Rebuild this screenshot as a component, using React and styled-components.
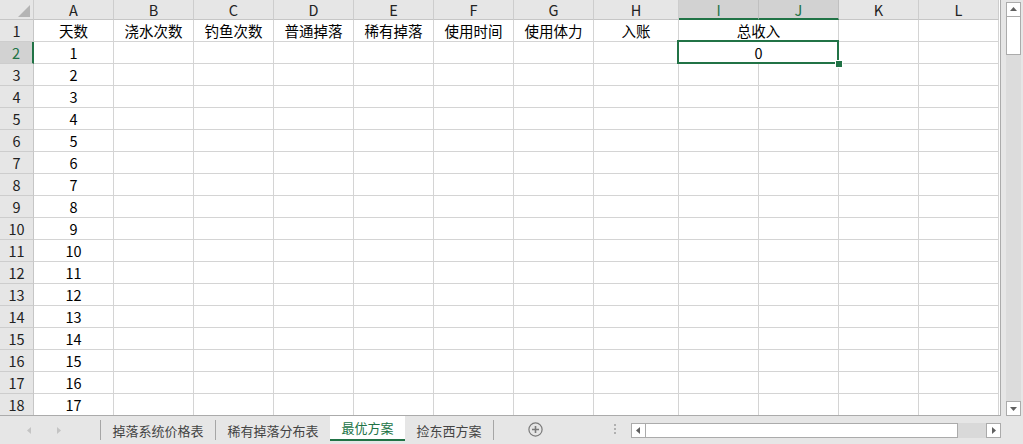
import React from "react";
import styled, { createGlobalStyle } from "styled-components";

const GlobalStyle = createGlobalStyle`
  html, body {
    margin: 0;
    padding: 0;
    background: #e6e6e6;
  }
  body {
    font-family: "Noto Sans CJK SC", "Liberation Sans", sans-serif;
  }
`;

const GREEN = "#217346";

// column letters and widths, A..L
const COLUMNS = [
  ["A", 80], ["B", 80], ["C", 80], ["D", 80], ["E", 80], ["F", 80],
  ["G", 80], ["H", 85], ["I", 80], ["J", 80], ["K", 80], ["L", 80],
];

const HEADINGS = ["天数", "浇水次数", "钓鱼次数", "普通掉落", "稀有掉落", "使用时间", "使用体力", "入账"];

const SHEETS = [
  { name: "掉落系统价格表", sep: true },
  { name: "稀有掉落分布表", sep: false },
  { name: "最优方案", active: true },
  { name: "捡东西方案", sep: true },
];

const Page = styled.div`
  width: 1023px;
  height: 444px;
  display: flex;
  flex-direction: column;
  overflow: hidden;
  background: #e6e6e6;
`;

const Body = styled.div`
  height: 416px;
  display: flex;
`;

const SheetArea = styled.div`
  width: 1001px;
  height: 416px;
  overflow: hidden;
  border-right: 1px solid #ababab;
  border-bottom: 1px solid #ababab;
  box-sizing: border-box;
  background: #fff;
`;

const Grid = styled.div`
  display: grid;
  grid-template-columns: 34px ${COLUMNS.map(([, w]) => `${w}px`).join(" ")};
  grid-auto-rows: 22px;
  grid-template-rows: 20px;
`;

const Cell = styled.div`
  box-sizing: border-box;
  border-right: 1px solid #d4d4d4;
  border-bottom: 1px solid #d4d4d4;
  display: flex;
  align-items: flex-end;
  justify-content: center;
  padding-bottom: 1px;
  font-size: 14.5px;
  line-height: 18px;
  color: #000;
  white-space: nowrap;
  position: relative;
  grid-column: ${(p) => (p.$span ? `span ${p.$span}` : "auto")};
`;

const ColHead = styled.div`
  box-sizing: border-box;
  background: ${(p) => (p.$sel ? "#d2d2d2" : "#e6e6e6")};
  border-right: 1px solid ${(p) => (p.$sel ? "#c0c0c0" : "#cdcdcd")};
  border-bottom: ${(p) => (p.$sel ? `2px solid ${GREEN}` : "1px solid #c6c6c6")};
  color: ${(p) => (p.$sel ? GREEN : "#222")};
  display: flex;
  align-items: center;
  justify-content: center;
  font-size: 14.5px;
  line-height: 18px;
  padding-top: ${(p) => (p.$sel ? "1px" : "0")};
`;

const Corner = styled.div`
  box-sizing: border-box;
  background: #e6e6e6;
  border-right: 1px solid #cdcdcd;
  border-bottom: 1px solid #c6c6c6;
  display: flex;
  align-items: flex-end;
  justify-content: flex-end;
  padding: 0 3px 2px 0;
`;

const RowHead = styled.div`
  box-sizing: border-box;
  background: ${(p) => (p.$sel ? "#d2d2d2" : "#e6e6e6")};
  border-right: ${(p) => (p.$sel ? `2px solid ${GREEN}` : "1px solid #c6c6c6")};
  border-bottom: 1px solid #cdcdcd;
  color: ${(p) => (p.$sel ? GREEN : "#222")};
  display: flex;
  align-items: flex-end;
  justify-content: center;
  padding-bottom: 1px;
  font-size: 14.5px;
  line-height: 18px;
`;

// selection frame drawn over the merged cell I2:J2
const Selection = styled.div`
  position: absolute;
  left: -2px;
  top: -2px;
  right: -1px;
  bottom: -1px;
  border: 2px solid ${GREEN};
  pointer-events: none;
  z-index: 2;

  &::after {
    content: "";
    position: absolute;
    right: -6px;
    bottom: -6px;
    width: 8px;
    height: 8px;
    background: ${GREEN};
    border: 1px solid #fff;
    box-sizing: border-box;
  }
`;

const VScroll = styled.div`
  width: 22px;
  display: flex;
  flex-direction: column;
  align-items: center;
  padding: 2px 0 0 2px;
  box-sizing: border-box;
`;

const VTrack = styled.div`
  width: 15px;
  flex: 1;
  display: flex;
  flex-direction: column;
  background: #dcdcdc;
`;

const ArrowBox = styled.div`
  box-sizing: border-box;
  width: 15px;
  height: 15px;
  background: #fff;
  border: 1px solid #ababab;
  display: flex;
  align-items: center;
  justify-content: center;
  flex-shrink: 0;
`;

const VThumb = styled.div`
  box-sizing: border-box;
  height: 38px;
  background: #fff;
  border: 1px solid #ababab;
  border-top: none;
`;

const Spacer = styled.div`
  flex: 1;
`;

const TabBar = styled.div`
  height: 28px;
  display: flex;
  align-items: flex-start;
`;

const Nav = styled.div`
  width: 101px;
  height: 20px;
  margin-top: 4px;
  display: flex;
  align-items: center;
  gap: 22px;
  padding-left: 26px;
  box-sizing: border-box;
  border-right: 1px solid #a6a6a6;
`;

const Tab = styled.div`
  box-sizing: border-box;
  height: ${(p) => (p.$active ? "25px" : "20px")};
  margin-top: ${(p) => (p.$active ? "0" : "4px")};
  padding: 0 11.5px;
  background: ${(p) => (p.$active ? "#fff" : "transparent")};
  border-bottom: ${(p) => (p.$active ? `2px solid ${GREEN}` : "none")};
  border-right: ${(p) => (p.$sep ? "1px solid #a6a6a6" : "none")};
  color: ${(p) => (p.$active ? GREEN : "#444")};
  font-size: 13px;
  display: flex;
  align-items: center;
  white-space: nowrap;
`;

const AddSheet = styled.div`
  margin: 6px 0 0 34px;
  width: 15px;
  height: 15px;
  display: flex;
`;

const Dots = styled.div`
  margin: 8px 0 0 71px;
  width: 3px;
  display: flex;
  flex-direction: column;
  gap: 2px;

  span {
    width: 2px;
    height: 2px;
    background: #b0b0b0;
  }
`;

const HScroll = styled.div`
  margin: 7px 0 0 14px;
  width: 370px;
  height: 15px;
  display: flex;
  background: #d9d9d9;
`;

const HThumb = styled.div`
  box-sizing: border-box;
  width: 312px;
  height: 15px;
  background: #fff;
  border: 1px solid #ababab;
  border-left: none;
`;

const Tri = ({ dir, color = "#606060", size = 7 }) => {
  const pts = {
    up: "0,5 3.5,1 7,5",
    down: "0,2 3.5,6 7,2",
    left: "5,0 1,3.5 5,7",
    right: "2,0 6,3.5 2,7",
  }[dir];
  return (
    <svg width={size} height={size} viewBox="0 0 7 7">
      <polygon points={pts} fill={color} />
    </svg>
  );
};

const App = () => {
  const rows = [];
  for (let r = 1; r <= 18; r++) rows.push(r);

  return (
    <>
      <GlobalStyle />
      <Page>
        <Body>
          <SheetArea>
            <Grid>
              <Corner>
                <svg width="12" height="12" viewBox="0 0 12 12">
                  <polygon points="12,0 12,12 0,12" fill="#b4b4b4" />
                </svg>
              </Corner>
              {COLUMNS.map(([c]) => (
                <ColHead key={c} $sel={c === "I" || c === "J"}>
                  {c}
                </ColHead>
              ))}

              {rows.map((r) => {
                const cells = [];
                if (r === 1) {
                  HEADINGS.forEach((h, i) => cells.push(<Cell key={i}>{h}</Cell>));
                  cells.push(<Cell key="ij" $span={2}>总收入</Cell>);
                  cells.push(<Cell key="k" />, <Cell key="l" />);
                } else if (r === 2) {
                  cells.push(<Cell key="a">1</Cell>);
                  for (let i = 0; i < 7; i++) cells.push(<Cell key={i} />);
                  cells.push(
                    <Cell key="ij" $span={2}>
                      0
                      <Selection />
                    </Cell>
                  );
                  cells.push(<Cell key="k" />, <Cell key="l" />);
                } else {
                  cells.push(<Cell key="a">{r - 1}</Cell>);
                  for (let i = 0; i < 11; i++) cells.push(<Cell key={i} />);
                }
                return (
                  <React.Fragment key={r}>
                    <RowHead $sel={r === 2}>{r}</RowHead>
                    {cells}
                  </React.Fragment>
                );
              })}
            </Grid>
          </SheetArea>

          <VScroll>
            <VTrack>
              <ArrowBox>
                <Tri dir="up" />
              </ArrowBox>
              <VThumb />
              <Spacer />
              <ArrowBox>
                <Tri dir="down" />
              </ArrowBox>
            </VTrack>
          </VScroll>
        </Body>

        <TabBar>
          <Nav>
            <Tri dir="left" color="#c4c4c4" />
            <Tri dir="right" color="#c4c4c4" />
          </Nav>
          {SHEETS.map((s) => (
            <Tab key={s.name} $active={s.active} $sep={s.sep}>
              {s.name}
            </Tab>
          ))}
          <AddSheet>
            <svg width="15" height="15" viewBox="0 0 15 15">
              <circle cx="7.5" cy="7.5" r="6.6" fill="none" stroke="#7a7a7a" strokeWidth="1.2" />
              <path d="M7.5 4v7M4 7.5h7" stroke="#7a7a7a" strokeWidth="1.6" />
            </svg>
          </AddSheet>
          <Dots>
            <span />
            <span />
            <span />
          </Dots>
          <HScroll>
            <ArrowBox>
              <Tri dir="left" />
            </ArrowBox>
            <HThumb />
            <Spacer />
            <ArrowBox>
              <Tri dir="right" />
            </ArrowBox>
          </HScroll>
        </TabBar>
      </Page>
    </>
  );
};

export default App;
